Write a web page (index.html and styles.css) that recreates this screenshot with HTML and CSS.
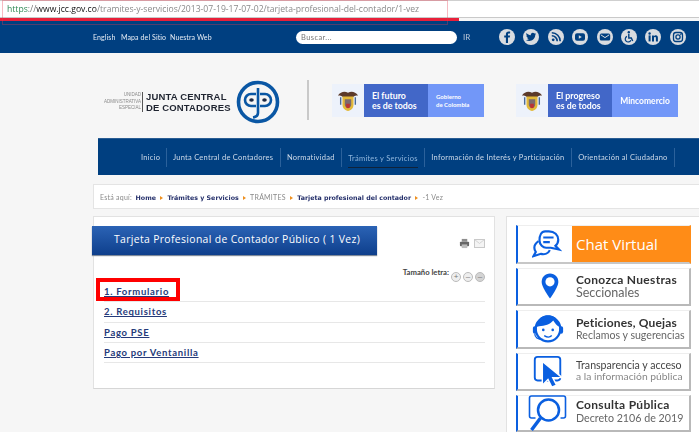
FILE: index.html
```html
<!DOCTYPE html>
<html lang="es">
<head>
<meta charset="utf-8">
<title>Tarjeta Profesional de Contador Público</title>
<link rel="stylesheet" href="styles.css">
</head>
<body>
<div class="url-bar"><span class="scheme">https</span><span class="url-sep">://</span><span class="domain">www.jcc.gov.co</span><span class="path">/tramites-y-servicios/2013-07-19-17-07-02/tarjeta-profesional-del-contador/1-vez</span></div>
<div class="url-mark"></div>
<div class="url-line"></div>

<div class="top-bar">
  <a class="top-link">English</a><a class="top-link">Mapa del Sitio</a><a class="top-link">Nuestra Web</a>
  <div class="search">Buscar...</div>
  <span class="ir">IR</span>
  <div class="socials">
    <svg class="soc" viewBox="0 0 16 16"><circle cx="8" cy="8" r="8" fill="#d9dce0"/><path d="M9 14V8.600h1.800l.3-2H9V5.400c0-.6.2-1 1-1h1.100V2.600C10.800 2.500 10.200 2.500 9.600 2.500 8 2.500 6.900 3.500 6.900 5.200v1.400H5.200v2h1.700V14z" fill="#003f80"/></svg>
    <svg class="soc" viewBox="0 0 16 16"><circle cx="8" cy="8" r="8" fill="#d9dce0"/><path d="M13 4.800c-.4.200-.8.300-1.200.3.400-.3.800-.7.900-1.200-.4.200-.9.400-1.300.5a2.100 2.100 0 0 0-3.600 1.900C6.100 6.200 4.600 5.400 3.600 4.100c-.6 1-.3 2.200.6 2.800-.3 0-.6-.1-.9-.3 0 1 .7 1.900 1.700 2.100-.3.100-.6.100-.9 0 .3.800 1 1.400 1.900 1.400-.9.700-2 1-3.100.9 3.900 2.300 9.400.2 9.400-5.400.4-.2.700-.5.700-.8z" fill="#003f80"/></svg>
    <svg class="soc" viewBox="0 0 16 16"><circle cx="8" cy="8" r="8" fill="#d9dce0"/><circle cx="5.200" cy="10.800" r="1.400" fill="#003f80"/><path d="M3.800 6.800a5.400 5.400 0 0 1 5.400 5.400M3.800 3.800a8.400 8.400 0 0 1 8.400 8.400" fill="none" stroke="#003f80" stroke-width="1.600"/></svg>
    <svg class="soc" viewBox="0 0 16 16"><circle cx="8" cy="8" r="8" fill="#d9dce0"/><rect x="3" y="4.300" width="10" height="7.400" rx="2" fill="#003f80"/><path d="M6.800 6.200v3.600L9.800 8z" fill="#d9dce0"/></svg>
    <svg class="soc" viewBox="0 0 16 16"><circle cx="8" cy="8" r="8" fill="#d9dce0"/><rect x="2.800" y="4.400" width="10.400" height="7.200" rx="1.500" fill="#003f80"/><path d="M3.800 5.800 8 8.600l4.200-2.800" fill="none" stroke="#d9dce0"/></svg>
    <svg class="soc" viewBox="0 0 16 16"><circle cx="8" cy="8" r="8" fill="#d9dce0"/><circle cx="7.800" cy="3.200" r="1.200" fill="#003f80"/><path d="M7.800 5v4h2.500l1.400 3" fill="none" stroke="#003f80" stroke-width="1.400"/><path d="M6 7.400a2.900 2.900 0 1 0 3.800 3.800" fill="none" stroke="#003f80" stroke-width="1.200"/></svg>
    <svg class="soc" viewBox="0 0 16 16"><circle cx="8" cy="8" r="8" fill="#d9dce0"/><rect x="3.600" y="6.400" width="2" height="6" fill="#003f80"/><circle cx="4.600" cy="4.500" r="1.200" fill="#003f80"/><path d="M7 6.400h1.900v.9c.4-.7 1.100-1 1.900-1 1.500 0 2.100 1 2.100 2.500v3.600h-2V9.200c0-.7-.2-1.200-.9-1.200s-1 .5-1 1.200v3.200H7z" fill="#003f80"/></svg>
    <svg class="soc" viewBox="0 0 16 16"><circle cx="8" cy="8" r="8" fill="#d9dce0"/><rect x="3.500" y="3.500" width="9" height="9" rx="2.500" fill="none" stroke="#003f80" stroke-width="1.300"/><circle cx="8" cy="8" r="2.100" fill="none" stroke="#003f80" stroke-width="1.300"/><circle cx="10.800" cy="5.200" r=".7" fill="#003f80"/></svg>
  </div>
</div>

<header class="brand-row">
  <div class="logo">
    <div class="logo-small"><span>UNIDAD</span><span>ADMINISTRATIVA</span><span>ESPECIAL</span></div>
    <div class="logo-name"><span>JUNTA CENTRAL</span><span>DE CONTADORES</span></div>
    <svg class="logo-mark" viewBox="0 0 44 44"><circle cx="22" cy="22" r="19.500" fill="none" stroke="#0a57a4" stroke-width="3.600"/><path d="M20 14h-5a6 6 0 0 0 0 12h5" fill="none" stroke="#0a57a4" stroke-width="2.600"/><path d="M24 14h5a6 6 0 0 1 0 12h-5" fill="none" stroke="#0a57a4" stroke-width="2.600"/><path d="M22 8v25c0 2.500-2 4-5 4.500" fill="none" stroke="#0a57a4" stroke-width="2.600"/><ellipse cx="15.500" cy="20" rx="2.300" ry="1.800" fill="#1e2a44"/><ellipse cx="28.500" cy="20" rx="2.300" ry="1.800" fill="#1e2a44"/></svg>
  </div>
  <div class="brand-rule"></div>
  <div class="gov gov-one">
    <div class="seal"><svg viewBox="0 0 24 26"><path d="M1 7c3-4 7-5 11-3 4-2 8-1 11 3-3 0-5 .5-6 2.500H7C6 7.500 4 7 1 7z" fill="#5c3a2a"/><path d="M6 8h12v9c0 4-3 6-6 7-3-1-6-3-6-7z" fill="#e3b93a"/><path d="M8.500 11h7v6c0 2-2 3-3.500 4-1.500-1-3.500-2-3.500-4z" fill="#7b6a6e"/><path d="M10 16h4v4l-2 1-2-1z" fill="#b33"/><path d="M4 9v8M20 9v8" stroke="#4a6a9a" stroke-width="1.500"/></svg></div>
    <div class="gov-dark"><span>El futuro</span><span>es de todos</span></div>
    <div class="gov-light small"><span>Gobierno</span><span>de Colombia</span></div>
  </div>
  <div class="gov gov-two">
    <div class="seal"><svg viewBox="0 0 24 26"><path d="M1 7c3-4 7-5 11-3 4-2 8-1 11 3-3 0-5 .5-6 2.500H7C6 7.500 4 7 1 7z" fill="#5c3a2a"/><path d="M6 8h12v9c0 4-3 6-6 7-3-1-6-3-6-7z" fill="#e3b93a"/><path d="M8.500 11h7v6c0 2-2 3-3.500 4-1.500-1-3.500-2-3.500-4z" fill="#7b6a6e"/><path d="M10 16h4v4l-2 1-2-1z" fill="#b33"/><path d="M4 9v8M20 9v8" stroke="#4a6a9a" stroke-width="1.500"/></svg></div>
    <div class="gov-dark"><span>El progreso</span><span>es de todos</span></div>
    <div class="gov-light"><span>Mincomercio</span></div>
  </div>
</header>

<nav class="main-nav">
  <a class="nav-item">Inicio</a><a class="nav-item">Junta Central de Contadores</a><a class="nav-item">Normatividad</a><a class="nav-item nav-active"><span>Trámites y Servicios</span></a><a class="nav-item">Información de Interés y Participación</a><a class="nav-item">Orientación al Ciudadano</a>
</nav>

<div class="crumbs">Está aquí: <b class="home">Home</b><i></i><b>Trámites y Servicios</b><i></i>TRÁMITES<i></i><b>Tarjeta profesional del contador</b><i></i>-1 Vez</div>

<div class="columns">
  <main class="panel">
    <h1 class="title">Tarjeta Profesional de Contador Público ( 1 Vez)</h1>
    <div class="tools">
      <svg class="tool" viewBox="0 0 12 12"><rect x="3" y="1" width="6" height="3" fill="#8d8d8d"/><rect x="1" y="4" width="10" height="5" rx="1" fill="#666"/><rect x="3" y="7" width="6" height="4" fill="#bbb"/></svg>
      <svg class="tool tool-mail" viewBox="0 0 12 10"><rect x=".5" y=".5" width="11" height="9" fill="#f4f4f4" stroke="#c4c4c4"/><path d="M1 1l5 4 5-4" fill="none" stroke="#cfcfcf"/></svg>
    </div>
    <div class="size-row">Tamaño letra:
      <span class="size-btn">+</span><span class="size-btn">–</span><span class="size-btn dark">–</span>
    </div>
    <ul class="doc-list">
      <li><a>1. Formulario</a></li>
      <li><a>2. Requisitos</a></li>
      <li><a>Pago PSE</a></li>
      <li><a>Pago por Ventanilla</a></li>
    </ul>
    <div class="red-box"></div>
  </main>

  <aside class="side">
    <div class="card card-chat">
      <svg class="card-icon icon-chat" viewBox="0 0 32 32"><path d="M14 2.500h4c6 0 10 4 10 9 0 3-1.300 5-3 6.500l4 4-9-2h-5c-3 0-7-3-7-8 0-5 2-9.500 6-9.500z" fill="none" stroke="#0a5fe0" stroke-width="2.300"/><path d="M7 13c-3 2-4.500 4-4.500 7 0 2 .8 3.500 1.500 4.500L1.500 29l8-2.500c4 1 8-.5 9.500-4" fill="none" stroke="#0a5fe0" stroke-width="2.300"/><path d="M12 9h11M12 14h7" stroke="#0a5fe0" stroke-width="2.200"/></svg>
      <div class="chat-label">Chat Virtual</div>
    </div>
    <div class="card">
      <svg class="card-icon icon-pin" viewBox="0 0 24 32"><path d="M12 1C6 1 2 5.500 2 11c0 7 10 20 10 20s10-13 10-20C22 5.500 18 1 12 1z" fill="#0a5fe0"/><circle cx="12" cy="11" r="5.500" fill="#fff"/></svg>
      <div class="card-text"><strong>Conozca Nuestras</strong><span class="sec">Seccionales</span></div>
    </div>
    <div class="card">
      <svg class="card-icon" viewBox="0 0 36 36"><circle cx="18" cy="18" r="13" fill="#fff" stroke="#0a5fe0" stroke-width="2.400"/><path d="M5.500 16C7 6 13 3.500 18 3.500S29 6 30.500 16c-3-1-5-4-7-7-3 4-9 6-15 6z" fill="#0a5fe0"/><circle cx="13" cy="19" r="1.400" fill="#0a5fe0"/><circle cx="23" cy="19" r="1.400" fill="#0a5fe0"/><path d="M14 25c3 2 6 2 8 0" fill="none" stroke="#0a5fe0" stroke-width="1.500"/><rect x="2" y="15" width="4" height="8" rx="2" fill="#0a5fe0"/><rect x="30" y="15" width="4" height="8" rx="2" fill="#0a5fe0"/><path d="M4 23c0 5 4 6 9 6" fill="none" stroke="#0a5fe0" stroke-width="1.300"/></svg>
      <div class="card-text tight"><strong>Peticiones, Quejas</strong><span class="rec">Reclamos y sugerencias</span></div>
    </div>
    <div class="card">
      <svg class="card-icon" viewBox="0 0 36 36"><rect x="4" y="3" width="27" height="25" rx="3" fill="none" stroke="#0a5fe0" stroke-width="2"/><path d="M12 8v25l6-6 4 8 5-2-4-8h10z" fill="#0a5fe0" stroke="#fff" stroke-width="1.500"/></svg>
      <div class="card-text tight"><span class="trans">Transparencia y acceso</span><span class="muted">a la información pública</span></div>
    </div>
    <div class="card card-last">
      <svg class="card-icon icon-search" viewBox="0 0 40 38"><path d="M8 24H4a2 2 0 0 1-2-2V4a2 2 0 0 1 2-2h32a2 2 0 0 1 2 2v18a2 2 0 0 1-2 2h-3" fill="none" stroke="#0a5fe0" stroke-width="1.600"/><circle cx="21" cy="16" r="10.500" fill="#fff" stroke="#0a5fe0" stroke-width="2.500"/><path d="M13 24 4 36" stroke="#0a5fe0" stroke-width="3.500"/></svg>
      <div class="card-text wide"><strong>Consulta Pública</strong><span class="dec">Decreto 2106 de 2019</span></div>
    </div>
  </aside>
</div>
</body>
</html>
```
FILE: styles.css
```css
* { box-sizing: border-box; }
html, body { margin: 0; padding: 0; height: 432px; overflow: hidden; }
body { position: relative; background: #f6f6f6; font-family: "Open Sans", "Liberation Sans", sans-serif; color: #333; filter: blur(.3px); }
a { color: inherit; }

.url-bar { height: 18px; background: #fff; border-top: 1px solid #cfcfcf; border-bottom: 1px solid #c9c9c9; padding-left: 7px; font: 8.600px/16px "Open Sans", sans-serif; white-space: nowrap; color: #8a8a8a; }
.scheme { color: #2f8a55; }
.url-sep { color: #777; }
.domain { color: #111; }
.url-line { width: 459px; height: 3px; background: #e8203a; position: relative; z-index: 2; }
.url-mark { position: absolute; left: 2px; top: 0; width: 446px; height: 25px; border: 1px solid rgba(230, 60, 80, .35); z-index: 3; }

.top-bar { height: 32px; background: #003f80; display: flex; align-items: center; padding-left: 93px; color: #e6edf5; font: 7px "Lato", sans-serif; }
.top-link { width: 28px; letter-spacing: .1px; white-space: nowrap; }
.top-link:nth-child(2) { width: 49px; }
.top-link:nth-child(3) { width: 42px; }
.search { width: 161px; height: 13px; margin-left: 84px; background: #fff; border-radius: 7px; color: #777; font: 7.500px/13px "Lato", sans-serif; padding-left: 5px; letter-spacing: .4px; }
.ir { margin-left: 6px; width: 36px; font-size: 8px; color: #b9c7d8; }
.socials { display: flex; gap: 8.400px; }
.soc { width: 16px; height: 16px; display: block; }

.brand-row { height: 85px; display: flex; align-items: flex-start; padding-left: 102px; }
.logo { display: flex; align-items: center; margin-top: 27px; width: 178px; }
.logo-small { display: flex; flex-direction: column; align-items: flex-end; font: 4.500px/6.500px "Liberation Sans", sans-serif; color: #8a8a8a; width: 41px; padding-right: 1px; border-right: 1px solid #555; }
.logo-name { display: flex; flex-direction: column; font: bold 9.500px/11px "Liberation Sans", sans-serif; color: #1f2430; padding-left: 3px; width: 90px; letter-spacing: .15px; white-space: nowrap; }
.logo-mark { width: 44px; height: 44px; margin-left: 3px; flex: none; }
.brand-rule { width: 2px; height: 40px; background: #c9c9c9; margin: 27px 0 0 27px; }
.gov { display: flex; height: 33px; margin-top: 31px; color: #fff; font-family: "Lato", sans-serif; }
.gov-one { margin-left: 23px; width: 152px; }
.gov-two { margin-left: 32px; width: 162px; }
.seal { width: 32px; background: #edf2fb; display: flex; align-items: center; justify-content: center; flex: none; }
.seal svg { width: 22px; height: 24px; }
.gov-dark { width: 64px; flex: none; background: #4267c8; display: flex; flex-direction: column; justify-content: center; padding-left: 8px; font: bold 8.800px/9.500px "Lato", sans-serif; white-space: nowrap; }
.gov-light { flex: 1; background: #7297f8; display: flex; flex-direction: column; justify-content: center; align-items: center; font: bold 8.500px "Lato", sans-serif; }
.gov-light.small { font-size: 6px; line-height: 7.500px; align-items: flex-start; padding-left: 8px; }

.main-nav { margin-left: 98px; height: 37px; background: #003f80; border-top: 1px solid #2a5d93; display: flex; align-items: center; padding: 0 0 0 37px; color: #ccd9e8; font: 7.500px "Lato", sans-serif; letter-spacing: .25px; }
.nav-item { display: flex; align-items: center; height: 19px; padding: 0 6.300px; border-right: 1px solid #2b619b; white-space: nowrap; }
.nav-item:first-child { padding: 0 5.500px 0 6px; }
.nav-active { color: #8fb6dc; }
.nav-active span { border-bottom: 1px solid #10233a; line-height: 19px; height: 19px; margin-top: 3px; }

.crumbs { margin: 9px 0 0 93px; height: 25px; background: #fff; border: 1px solid #e4e4e4; border-right: 0; padding-left: 6px; font: 7px/24px "Lato", sans-serif; letter-spacing: .25px; color: #8a8a8a; white-space: nowrap; }
.crumbs b { color: #25306b; font-family: "DejaVu Sans", sans-serif; font-size: 6.300px; letter-spacing: 0; }
.crumbs .home { margin-left: 1.500px; }
.crumbs i { display: inline-block; margin: 0 4.200px; border-left: 3px solid #ee9020; border-top: 2px solid transparent; border-bottom: 2px solid transparent; }

.columns { display: flex; margin: 7px 0 0 93px; gap: 11px; align-items: flex-start; }
.panel { position: relative; width: 402px; height: 173px; background: #fff; border: 1px solid #e2e2e2; border-bottom-color: #d6d6d6; padding: 9px 9px 0 10px; }
.title { margin: 0 0 0 -12px; width: 285px; height: 29px; background: linear-gradient(#2b63b5, #0e3f8c); box-shadow: 0 1px 1px #7f8a99; color: #fff; font: 400 10.400px/27px "Open Sans", sans-serif; letter-spacing: .35px; padding-left: 22px; white-space: nowrap; }
.tools { position: absolute; right: 9px; top: 21px; display: flex; align-items: center; gap: 4px; }
.tool { width: 11px; height: 11px; display: block; }
.tool-mail { height: 9px; width: 11px; }
.size-row { display: flex; justify-content: flex-end; align-items: center; margin-top: 16px; height: 12px; font: bold 7.700px "Lato", sans-serif; color: #444; white-space: pre; }
.size-btn { width: 10px; height: 10px; border-radius: 50%; background: #eee; border: 1px solid #bbb; color: #777; font: 8px/7px "Liberation Sans", sans-serif; text-align: center; margin-left: 2px; }
.size-btn.dark { background: #d4d4d4; }
.doc-list { list-style: none; margin: -1px 0 0; padding: 0; }
.doc-list li { height: 20.300px; border-bottom: 1px solid #e7e7e7; font: bold 9.500px/19.500px "Lato", sans-serif; color: #253a7a; letter-spacing: .7px; }
.doc-list a { text-decoration: underline; text-underline-offset: 1px; }
.red-box { position: absolute; left: 2px; top: 61px; width: 84px; height: 23px; border: 4px solid #f00; }

.side { width: 193px; height: 220px; background: #fff; border: 1px solid #e2e2e2; border-right: 0; padding: 8px 8px 0 9px; display: flex; flex-direction: column; gap: 4px; }
.card { height: 38.500px; flex: none; display: flex; align-items: center; background: #fff; border-left: 2px solid #0a5fe0; border-right: 2px solid #b9b9b9; border-bottom: 2px solid #b9b9b9; border-top: 1px solid #eee; color: #3b3b3b; }
.card-icon { width: 36px; height: 34px; flex: none; margin: 0 8px 0 12px; }
.icon-chat { width: 30px; height: 32px; margin: 0 10px 0 14px; }
.icon-pin { width: 20px; height: 28px; margin: 0 14px 0 22px; }
.icon-search { width: 41px; height: 38px; margin: 0 6px 0 9px; }
.card-chat { border-right-color: #ff8c17; border-bottom-color: #c7c7c7; }
.chat-label { flex: 1; align-self: stretch; background: #ff8c17; color: #fff; font: 15px/36px "Open Sans", sans-serif; padding-left: 4px; }
.card-text { display: flex; flex-direction: column; white-space: nowrap; font: 12px/12px "Lato", sans-serif; color: #666; margin-left: 2px; }
.card-text strong { color: #333; font: 700 12px/12.500px "Lato", sans-serif; letter-spacing: .3px; }
.card-text.tight strong { letter-spacing: .15px; }
.sec { font-size: 12.500px; line-height: 13px; }
.rec { font-size: 10.600px; line-height: 11px; }
.dec { font-size: 10.700px; line-height: 13px; }
.trans { font-size: 10.600px; line-height: 11px; color: #444; }
.muted { font-size: 10.300px; line-height: 11px; color: #888; }
.card-last { height: 37px; }
.card-text.wide { margin-top: -3px; }
```
